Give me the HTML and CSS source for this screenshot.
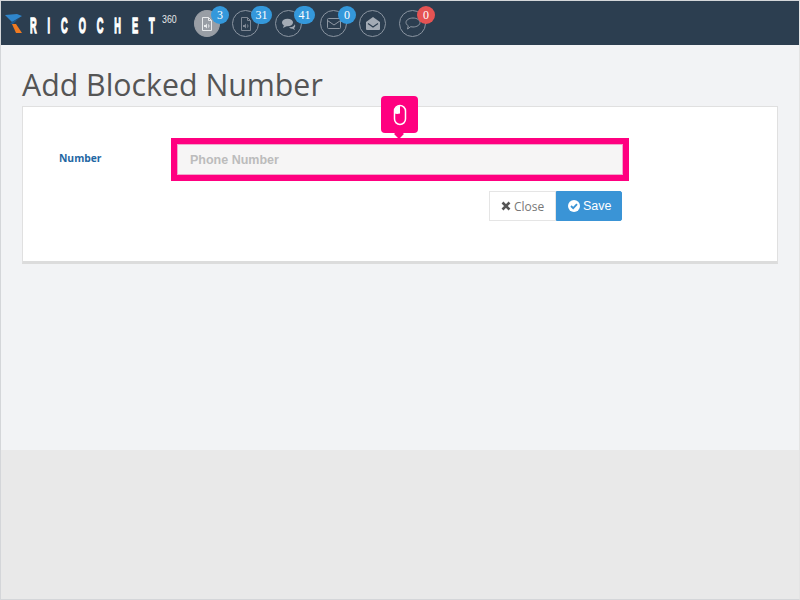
FILE: index.html
```html
<!DOCTYPE html>
<html lang="en">
<head>
  <meta charset="UTF-8" />
  <title>Add Blocked Number</title>
  <link rel="stylesheet" href="styles.css">
</head>
<body>
  <div class="frame">

    <!-- TOP BAR -->
    <header class="topbar">
      <div class="logo">
        <svg class="logo-mark" width="19" height="20" viewBox="0 0 19 20">
          <path d="M1 1 L13 0 L18 2 L8 8 Z" fill="#2f86cc"/>
          <path d="M8 8 L15 4 L9 10 L6 10 Z" fill="#1c5a8f"/>
          <path d="M8 10 L12 10 L18 19 L12 19 Z" fill="#f07b22"/>
        </svg>
        <span class="logo-text">RICOCHE<span class="logo-last">T</span></span>
        <sup class="logo-sup">360</sup>
      </div>
      <nav class="icons">
        <div class="nav-item">
          <span class="circle active">
            <svg width="12" height="14" viewBox="0 0 12 14" fill="none" stroke="#e8eaec"><path d="M1.500 .5h6l3 3v10h-9z"/><path d="M7.500 .5v3h3"/><path d="M3 8h1.500l1.500-1.500v5L4.500 10H3z" fill="#e8eaec" stroke="none"/><path d="M7.500 7.500q1 1.500 0 3" /></svg>
          </span>
          <span class="badge">3</span>
        </div>
        <div class="nav-item">
          <span class="circle">
            <svg width="12" height="14" viewBox="0 0 12 14" fill="none" stroke="#7f8894"><path d="M1.500 .5h6l3 3v10h-9z"/><path d="M7.500 .5v3h3"/><path d="M3 8h1.500l1.500-1.500v5L4.500 10H3z" fill="#7f8894" stroke="none"/><path d="M7.500 7.500q1 1.500 0 3" /></svg>
          </span>
          <span class="badge wide">31</span>
        </div>
        <div class="nav-item spaced">
          <span class="circle">
            <svg width="14" height="12" viewBox="0 0 14 12" fill="#a3abb5"><ellipse cx="5.500" cy="4.500" rx="5.500" ry="3.800"/><path d="M2 7l-1 3 4-2z"/><path d="M7 9.200c3 .3 5-.8 5.800-3 .8 1.600.4 3-.8 3.800l1 2-3-1.400c-1.200.2-2.200-.4-3-1.400z"/></svg>
          </span>
          <span class="badge wide">41</span>
        </div>
        <div class="nav-item">
          <span class="circle">
            <svg width="14" height="11" viewBox="0 0 14 11" fill="none" stroke="#8f98a3"><rect x=".5" y=".5" width="13" height="10" rx="1"/><path d="M.5 2.500L7 7l6.500-4.500"/></svg>
          </span>
          <span class="badge">0</span>
        </div>
        <div class="nav-item no-badge">
          <span class="circle">
            <svg width="14" height="13" viewBox="0 0 14 13" fill="#a3abb5"><path d="M7 0L14 5v7a1 1 0 0 1-1 1H1a1 1 0 0 1-1-1V5z"/><path d="M2 6.500L7 10l5-3.500" fill="none" stroke="#2c3e50" stroke-width="1.200"/></svg>
          </span>
        </div>
        <div class="nav-item">
          <span class="circle">
            <svg width="16" height="13" viewBox="0 0 16 13" fill="none" stroke="#8f98a3"><path d="M8 1c3.800 0 7 2 7 4.500S11.800 10 8 10c-.8 0-1.600-.1-2.300-.3L2.500 12l.8-3.200C1.800 7.900 1 6.800 1 5.500 1 3 4.200 1 8 1z"/></svg>
          </span>
          <span class="badge red">0</span>
        </div>
      </nav>
    </header>

    <!-- MAIN -->
    <main class="content">
      <h1 class="title">Add Blocked Number</h1>
      <section class="card">
        <form class="form-row">
          <label class="field-label" for="phone">Number</label>
          <div class="highlight">
            <input class="field" id="phone" type="text" placeholder="Phone Number" />
            <div class="pointer">
              <svg width="14" height="22" viewBox="0 0 14 22" fill="none" stroke="#fff" stroke-width="1.500"><rect x="1.500" y="1.500" width="11" height="19" rx="5.500"/><path d="M7 2v7.500c-2 .5-4 .5-5.200 0V7C1.800 4 4 2 7 2z" fill="#fff" stroke="none"/></svg>
            </div>
          </div>
        </form>
        <div class="actions">
          <button class="btn btn-close" type="button">
            <svg width="10" height="10" viewBox="0 0 10 10"><path d="M1.500 1.500l7 7M8.500 1.500l-7 7" stroke="#555" stroke-width="2.600"/></svg>
            Close
          </button>
          <button class="btn btn-save" type="button">
            <svg width="12" height="12" viewBox="0 0 12 12"><circle cx="6" cy="6" r="6" fill="#fff"/><path d="M3 6l2.200 2.200L9 4.200" fill="none" stroke="#3a94d6" stroke-width="1.800"/></svg>
            Save
          </button>
        </div>
      </section>
    </main>

    <footer class="bottom"></footer>
  </div>
</body>
</html>
```

FILE: styles.css
```css
* {
  box-sizing: border-box;
}
body {
  margin: 0;
  font-family: "Open Sans", sans-serif;
}
.frame {
  width: 800px;
  height: 600px;
  display: flex;
  flex-direction: column;
  border: 1px solid #d4d6d9;
  border-right-color: #e4e4e4;
}
.topbar {
  height: 44px;
  flex: none;
  background: #2c3e50;
  display: flex;
  align-items: flex-start;
}
.logo {
  width: 193px;
  height: 44px;
  flex: none;
  padding: 13px 0 0 3px;
  display: flex;
  align-items: flex-start;
  color: #fff;
}
.logo-mark {
  flex: none;
}
.logo-text {
  width: 132px;
  margin-left: 7px;
  padding-top: 2px;
  font-family: "Liberation Sans", sans-serif;
  font-weight: bold;
  font-size: 22px;
  line-height: 20px;
  letter-spacing: 26px;
  white-space: nowrap;
  -webkit-text-stroke: 1.400px #fff;
  transform: scaleX(.42);
  transform-origin: left top;
}
.logo-last {
  letter-spacing: 0;
}
.logo-sup {
  font-family: "Liberation Sans", sans-serif;
  font-size: 11px;
  line-height: 10px;
  color: #e6e8eb;
  display: inline-block;
  transform: scaleX(.8);
  transform-origin: left top;
}
.icons {
  display: flex;
  gap: 3px;
  padding-top: 5px;
}
.nav-item {
  display: flex;
  align-items: flex-start;
}
.nav-item.spaced {
  margin-right: 2px;
}
.nav-item.no-badge {
  margin-right: 10px;
}
.circle {
  width: 27px;
  height: 27px;
  margin-top: 4px;
  border: 1px solid #8b95a1;
  border-radius: 50%;
  display: flex;
  align-items: center;
  justify-content: center;
}
.circle.active {
  width: 26px;
  background: #999ea5;
  border-color: #999ea5;
}
.badge {
  position: relative;
  min-width: 18px;
  height: 18px;
  margin-left: -9px;
  border-radius: 9px;
  background: #3498db;
  color: #fff;
  font-family: "Liberation Serif", serif;
  font-size: 12px;
  line-height: 18px;
  text-align: center;
}
.badge.wide {
  width: 21px;
  margin-left: -8px;
}
.badge.red {
  background: #e55353;
}
.content {
  flex: 1;
  background: #f2f3f5;
  padding: 0 21px;
}
.title {
  margin: 0;
  padding-top: 20px;
  height: 61px;
  font-weight: 400;
  font-size: 30.300px;
  line-height: 40px;
  color: #555;
}
.card {
  height: 158px;
  background: #fff;
  border: 1px solid #e0e0e0;
  border-bottom: 3px solid #dcdcdc;
}
.form-row {
  display: flex;
  align-items: center;
  padding: 31px 0 0 36px;
}
.field-label {
  width: 112px;
  font-weight: 700;
  font-size: 10.300px;
  color: #1f67a3;
  margin-top: -4px;
}
.highlight {
  position: relative;
  width: 458px;
  height: 43px;
  border: 6px solid #ff0080;
}
.field {
  display: block;
  width: 100%;
  height: 100%;
  padding: 0 12px;
  background: #f6f5f5;
  border: 1px solid #f0a8cc;
  outline: none;
  font-family: "Liberation Sans", sans-serif;
  font-weight: bold;
  font-size: 12.500px;
}
.field::placeholder {
  color: #bcbcbc;
}
.pointer {
  position: absolute;
  left: 204px;
  top: -48px;
  width: 37px;
  height: 37px;
  background: #ff0080;
  border-radius: 4px;
  display: flex;
  align-items: center;
  justify-content: center;
}
.pointer::after {
  content: "";
  position: absolute;
  left: 13px;
  top: 33px;
  width: 10px;
  height: 10px;
  background: #ff0080;
  transform: rotate(45deg) scale(.7);
}
.actions {
  display: flex;
  justify-content: flex-end;
  padding: 10px 155px 0 0;
}
.btn {
  height: 30px;
  display: flex;
  align-items: center;
  gap: 3px;
  font-size: 12px;
  border-radius: 0;
  cursor: pointer;
}
.btn-close {
  width: 67px;
  padding: 0 0 0 11px;
  background: #fff;
  color: #777;
  border: 1px solid #e5e5e5;
  font-family: "Open Sans", sans-serif;
}
.btn-save {
  width: 66px;
  padding: 0 0 0 11px;
  background: #3a94d6;
  color: #fff;
  border: 1px solid #3a94d6;
  border-radius: 0 2px 2px 0;
  font-family: "Liberation Sans", sans-serif;
  font-size: 12.500px;
}
.bottom {
  height: 149px;
  flex: none;
  background: #e9e9e9;
}
```
